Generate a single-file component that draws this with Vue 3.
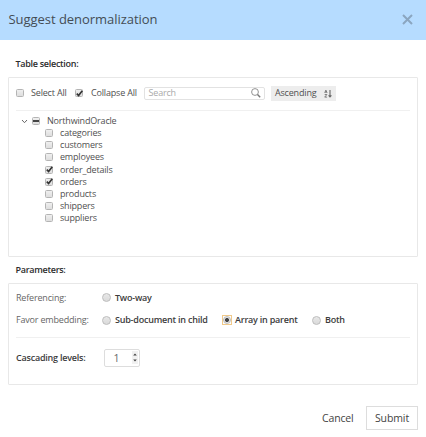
<script setup>
import { ref, reactive } from 'vue'

const tables = reactive([
  { name: 'categories', checked: false },
  { name: 'customers', checked: false },
  { name: 'employees', checked: false },
  { name: 'order_details', checked: true },
  { name: 'orders', checked: true },
  { name: 'products', checked: false },
  { name: 'shippers', checked: false },
  { name: 'suppliers', checked: false },
])
const collapse = ref(true)
const selectAll = ref(false)
const favor = ref('array')
const levels = ref(1)
</script>

<template>
  <main class="dialog">
    <header class="head">
      <h1 class="title">Suggest denormalization</h1>
      <svg class="close" viewBox="0 0 11 11"><path d="M1 1L10 10M10 1L1 10" /></svg>
    </header>

    <h2 class="section first">Table selection:</h2>
    <section class="panel tables">
      <div class="toolbar">
        <span class="box" @click="selectAll = !selectAll">
          <svg v-if="selectAll" viewBox="0 0 9 9"><path d="M1.8 4.6L3.6 6.5L7.3 1.8" /></svg>
        </span>
        <span class="lbl select">Select All</span>
        <span class="box" @click="collapse = !collapse">
          <svg v-if="collapse" viewBox="0 0 9 9"><path d="M1.8 4.6L3.6 6.5L7.3 1.8" /></svg>
        </span>
        <span class="lbl collapse">Collapse All</span>
        <div class="search">
          <span>Search</span>
          <svg viewBox="0 0 10 10"><circle cx="4" cy="4" r="3.4" /><path class="handle" d="M6.5 6.5L9.2 9.2" /></svg>
        </div>
        <div class="sort">
          <span>Ascending</span>
          <svg viewBox="0 0 8 9">
            <path d="M.7 3.9L1.9 1.1L3.1 3.9M1 3.1H2.8M.7 5.5H2.9L.7 8.1H3.1" />
            <path class="arrow" d="M6 1V7.8M4.6 6.4L6 7.9L7.4 6.4" />
          </svg>
        </div>
      </div>
      <div class="root">
        <svg class="chevron" viewBox="0 0 7 5"><path d="M1 1L3.5 3.7L6 1" /></svg>
        <span class="box"><i class="dash"></i></span>
        <span class="lbl">NorthwindOracle</span>
      </div>
      <ul class="tree">
        <li v-for="t in tables" :key="t.name" @click="t.checked = !t.checked">
          <span class="box">
            <svg v-if="t.checked" viewBox="0 0 9 9"><path d="M1.8 4.6L3.6 6.5L7.3 1.8" /></svg>
          </span>
          <span class="lbl">{{ t.name }}</span>
        </li>
      </ul>
    </section>

    <h2 class="section second">Parameters:</h2>
    <section class="panel params">
      <div class="row referencing">
        <span class="name">Referencing:</span>
        <span class="radio"></span><b class="two">Two-way</b>
      </div>
      <div class="row favor">
        <span class="name">Favor embedding:</span>
        <span class="radio"></span><b class="sub">Sub-document in child</b>
        <span class="focus"><span class="radio" :class="{ on: favor === 'array' }"></span></span><b class="array">Array in parent</b>
        <span class="radio"></span><b>Both</b>
      </div>
      <div class="row cascading">
        <b class="name">Cascading levels:</b>
        <div class="number">
          <span>{{ levels }}</span>
          <svg viewBox="0 0 6 13"><path d="M1.2 4.5L3 2.5L4.8 4.5ZM1.2 8.5L3 10.5L4.8 8.5Z" /></svg>
        </div>
      </div>
    </section>

    <footer class="foot">
      <span class="cancel">Cancel</span>
      <span class="submit">Submit</span>
    </footer>
  </main>
</template>

<style>
body { background: #fff; }
</style>

<style scoped>
* { box-sizing: border-box; }
.dialog {
  width: 426px;
  height: 437px;
  overflow: hidden;
  background: #fff;
  color: #505050;
  font-family: "Open Sans", "Noto Sans", sans-serif;
  font-size: 9px;
  letter-spacing: -.18px;
  line-height: 12px;
  white-space: nowrap;
}
.head {
  height: 40px;
  padding: 0 13px 2px 8.5px;
  display: flex;
  align-items: center;
  justify-content: space-between;
  background: #b6dcff;
}
.title { margin: 0; font-size: 13px; line-height: 18px; letter-spacing: -.04px; font-weight: 400; color: #444c54; }
.close { width: 11px; height: 11px; fill: none; stroke: #8ba6c0; stroke-width: 2; }
.section { margin: 0; padding-left: 15.5px; font-size: 9px; line-height: 12px; letter-spacing: -.28px; font-weight: 600; color: #2c2c2c; }
.first { padding-top: 18px; height: 37px; }
.second { padding-top: 7px; height: 26px; }
.panel { margin-left: 8px; width: 410px; border: 1px solid #e8e8e8; border-radius: 1px; }
.tables { height: 180px; padding: 0 7px; }
.toolbar {
  height: 33px;
  padding-bottom: 2px;
  display: flex;
  align-items: center;
  border-bottom: 1px solid #f0f0f0;
  margin-bottom: 4px;
}
.box {
  flex: none;
  width: 8px;
  height: 8px;
  display: flex;
  align-items: center;
  justify-content: center;
  border: 1px solid #b4b4b4;
  border-radius: 1.5px;
  background: linear-gradient(#efefef, #dedede);
}
.box svg { flex: none; width: 9px; height: 9px; fill: none; stroke: #333; stroke-width: 1.7; }
.dash { flex: none; width: 6px; height: 2px; background: #444; }
.select { width: 44px; margin-left: 7px; }
.collapse { margin-left: 8px; width: 46px; }
.search {
  margin-left: 7px;
  width: 121px;
  height: 13px;
  padding: 0 3px 0 3.5px;
  display: flex;
  align-items: center;
  justify-content: space-between;
  border: 1px solid #e2e2e2;
  border-radius: 2px;
  color: #aaa;
}
.search svg { width: 10px; height: 10px; margin-top: -1px; fill: none; stroke: #777; stroke-width: .8; }
.search .handle { stroke-width: 1.4; }
.sort {
  margin-left: 6px;
  width: 65px;
  height: 15px;
  padding: 0 4px;
  display: flex;
  align-items: center;
  justify-content: space-between;
  background: #ededed;
}
.sort svg { width: 8px; height: 9px; margin-top: 1px; fill: none; stroke: #666; stroke-width: .8; }
.sort .arrow { stroke-width: 1.1; }
.root { height: 12px; padding-left: 5px; display: flex; align-items: center; }
.chevron { width: 7px; height: 5px; margin-right: 4px; fill: none; stroke: #666; stroke-width: 1; }
.root .lbl { margin-left: 7px; }
.tree { list-style: none; margin: 0; padding: 0 0 0 29px; }
.tree li { height: 12.2px; display: flex; align-items: center; }
.tree .lbl { margin-left: 7px; }
.params { height: 102px; padding: 0 7px; }
.row { display: flex; align-items: center; color: #666; }
.row b { font-weight: 600; color: #3c3c3c; letter-spacing: -.22px; }
.name { width: 86px; flex: none; }
.referencing { height: 27px; }
.favor { height: 27px; padding-bottom: 8px; border-bottom: 1px solid #f0f0f0; }
.radio {
  flex: none;
  width: 9px;
  height: 9px;
  display: block;
  border: 1px solid #bdbdbd;
  border-radius: 50%;
  background: linear-gradient(#e8e8e8, #dadada);
}
.radio + b { margin-left: 4px; }
.on { background: radial-gradient(circle, #444 0 1.7px, #e4e4e4 2.3px); }
.focus { flex: none; width: 10px; height: 10px; border: 1px solid #f0c98a; display: flex; align-items: center; justify-content: center; }
.focus .radio { width: 8px; height: 8px; }
.focus + b { margin-left: 3px; }
.sub { width: 107px; }
.array { width: 77px; }
.cascading { height: 39px; }
.cascading .name { width: 88px; }
.number {
  width: 36px;
  height: 18px;
  padding: 0 1px 0 8.5px;
  display: flex;
  align-items: center;
  justify-content: space-between;
  border: 1px solid #ddd;
  border-radius: 2px;
  font-size: 10.5px;
}
.number svg { width: 6px; height: 13px; background: #f1f1f1; fill: #444; }
.foot { height: 52px; padding: 21px 8px 0 0; display: flex; justify-content: flex-end; font-size: 10.5px; color: #444; }
.cancel { line-height: 24px; margin-right: 12.5px; }
.submit { width: 52px; height: 24px; line-height: 22px; text-align: center; letter-spacing: -.1px; border: 1px solid #ddd; }
</style>
